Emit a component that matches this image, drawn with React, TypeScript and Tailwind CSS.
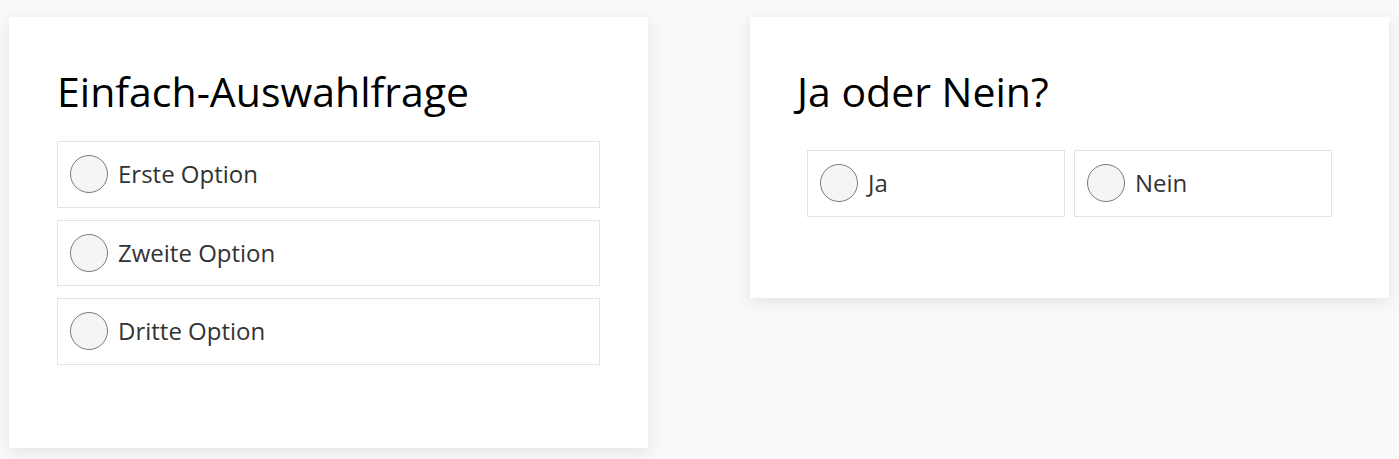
import React from "react";

function Radio() {
  return (
    <span className="block w-[38px] h-[38px] shrink-0 rounded-full border border-[#7a7a7a] bg-[#f5f5f5]" />
  );
}

function Option({ label, className = "" }: { label: string; className?: string }) {
  return (
    <div className={`flex items-center h-[66.5px] border border-[#e3e3e3] bg-white pl-[12px] ${className}`}>
      <Radio />
      <span className="ml-[10px] text-[24px] text-[#333333] leading-none">{label}</span>
    </div>
  );
}

export default function App() {
  return (
    <div
      className="min-h-[459px] w-[1399px] bg-[#f9f9f9] flex items-start pt-[17px] pl-[9px] gap-[102px]"
      style={{ fontFamily: '"Open Sans", sans-serif' }}
    >
      <div className="w-[639px] h-[431px] bg-white shadow-[0_4px_16px_rgba(0,0,0,0.09)] px-[48px] pt-[50px]">
        <h1 className="text-[41px] leading-[48px] text-black">Einfach-Auswahlfrage</h1>
        <div className="mt-[26px] flex flex-col gap-[12px]">
          <Option label="Erste Option" />
          <Option label="Zweite Option" />
          <Option label="Dritte Option" />
        </div>
      </div>
      <div className="w-[639px] h-[281px] bg-white shadow-[0_4px_16px_rgba(0,0,0,0.09)] px-[47px] pt-[50px]">
        <h1 className="text-[41px] leading-[48px] text-black">Ja oder Nein?</h1>
        <div className="mt-[35px] px-[10px] grid grid-cols-2 gap-[9px]">
          <Option label="Ja" />
          <Option label="Nein" />
        </div>
      </div>
    </div>
  );
}
